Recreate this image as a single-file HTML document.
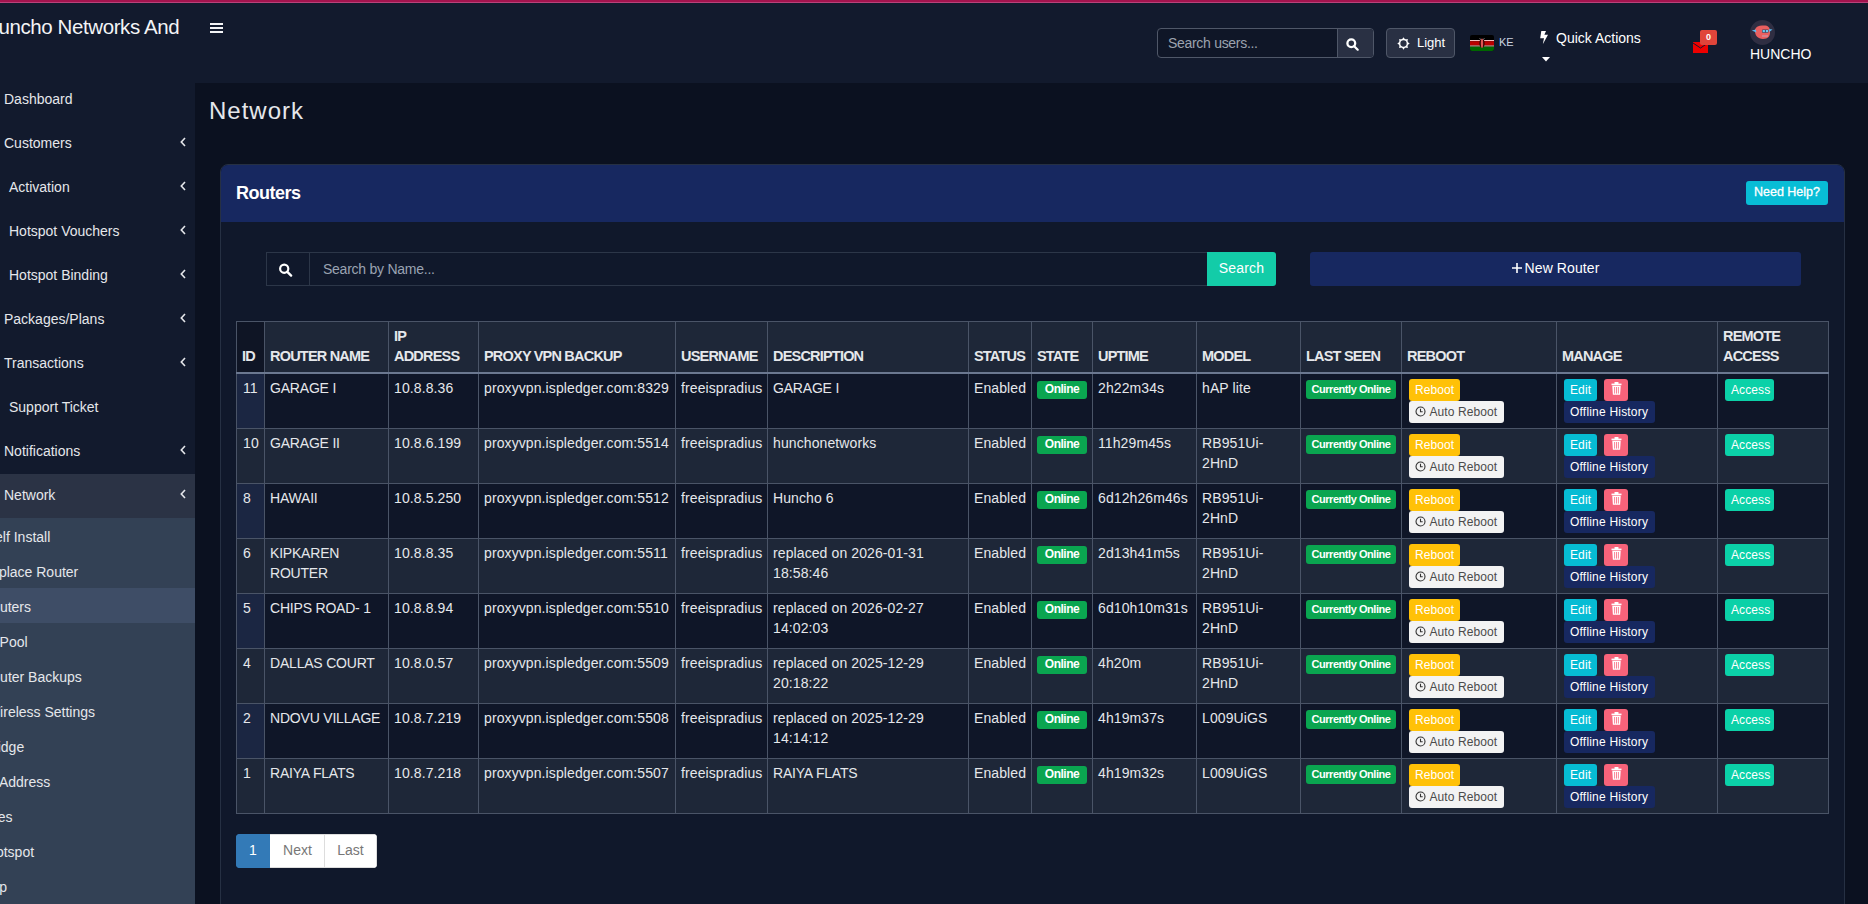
<!DOCTYPE html>
<html><head><meta charset="utf-8"><title>Routers</title>
<style>
*{box-sizing:border-box;margin:0;padding:0}
html,body{width:1868px;height:904px;overflow:hidden}
body{background:#0b1120;font-family:"Liberation Sans",sans-serif;color:#e5e7eb;position:relative}
.abs{position:absolute}
#topline{position:absolute;left:0;top:0;width:1868px;height:3px;background:#a3134d;border-bottom:1px solid #b8427a}
#header{position:absolute;left:0;top:3px;width:1868px;height:80px;background:#121a2d}
#sidebar{position:absolute;left:0;top:83px;width:195px;height:821px;background:#121a2d;overflow:hidden}
.si{position:absolute;font-size:14px;line-height:20px;color:#e5e7eb;white-space:nowrap}
.chev{position:absolute}
#netrow{position:absolute;left:0;top:391px;width:195px;height:44px;background:#2b3345}
#submenu{position:absolute;left:0;top:435px;width:195px;height:400px;background:#334155}
#subactive{position:absolute;left:0;top:505px;width:195px;height:35px;background:#3e4d66}
.ss{position:absolute;font-size:14px;line-height:20px;color:#e5e7eb;white-space:nowrap}
#brand{position:absolute;top:10px;font-size:20.5px;line-height:28px;letter-spacing:-0.4px;color:#f3f4f6;white-space:nowrap}
#content{position:absolute;left:195px;top:83px;width:1673px;height:821px;background:#0b1120}
#title{position:absolute;left:209px;top:96px;font-size:24px;line-height:30px;color:#e5e7eb;letter-spacing:1px}
#card{position:absolute;left:220px;top:164px;width:1625px;height:760px;background:#10182b;border:1px solid #263043;border-radius:8px;overflow:hidden}
#cardhead{position:absolute;left:0;top:0;width:1625px;height:57px;background:#172860}
#routers{position:absolute;left:15px;top:16px;font-size:18px;line-height:24px;font-weight:bold;color:#fff;letter-spacing:-0.5px}
#help{position:absolute;left:1525px;top:16px;width:82px;height:24px;background:#08bdd6;border-radius:3px;color:#fff;font-size:12.5px;line-height:23px;text-align:center;-webkit-text-stroke:0.3px #fff}
#sgroup{position:absolute;left:45px;top:87px;width:942px;height:34px;border:1px solid #2c3648;background:#10182b}
#sicon{position:absolute;left:0;top:0;width:43px;height:32px;border-right:1px solid #2c3648}
#sph{position:absolute;left:56px;top:7px;font-size:14px;line-height:18px;color:#9aa3b2;letter-spacing:-0.25px}
#sbtn{position:absolute;left:986px;top:87px;width:69px;height:34px;background:#13cca8;border-radius:0 3px 3px 0;color:#fff;font-size:14px;line-height:32px;text-align:center;letter-spacing:0.2px}
#newr{position:absolute;left:1089px;top:87px;width:491px;height:34px;background:#172860;border-radius:3px;color:#fff;font-size:14px;line-height:32px;text-align:center;letter-spacing:0.1px}
table{position:absolute;left:236px;top:321px;border-collapse:collapse;table-layout:fixed;width:1593px}
th,td{border:1px solid #4a5467;text-align:left;white-space:nowrap}
th{background:#1e2738;font-size:14.5px;line-height:20px;letter-spacing:-0.8px;font-weight:bold;color:#e5e7eb;vertical-align:bottom;padding:4px 5px 6px 5px;height:50px;border-bottom:2px solid #6b7890}
th.idh{background:#0f1525}
td{font-size:14px;line-height:20px;color:#e5e7eb;vertical-align:top;padding:4px 5px 5px 5px;height:55px;letter-spacing:0.1px}
td.nm{letter-spacing:-0.2px}
td.idc{padding-left:6px}
tr.odd td{background:#0f1628}
tr.odd td.idc{background:#1b2642}
tr.even td{background:#1e2738}
.bdg{display:inline-block;background:#0aa550;color:#fff;font-weight:bold;font-size:12px;line-height:17px;height:18px;padding:0;text-align:center;border-radius:3px;margin-top:3px;letter-spacing:-0.2px}
.online{width:50px;letter-spacing:-0.5px}
.cur{width:90px;height:19px;line-height:18px;margin-top:2px;font-size:11px;letter-spacing:-0.45px}
.btn{display:inline-block;color:#fff;font-size:12px;line-height:22px;height:22px;padding:0 6px;border-radius:3px;vertical-align:top}
.reboot{background:#ffc107;margin-top:1px;margin-left:2px}
.auto{background:#f3f3f3;color:#4b4b4b;margin-left:2px;width:95px;letter-spacing:0.1px}
.edit{background:#06bcd4;margin-top:1px;margin-left:2px}
.del{background:#f7637a;margin-left:7px;margin-top:1px;padding:0 6px;width:24px;text-align:center}
.del svg{vertical-align:-1px}
.hist{background:#172860;margin-left:2px;letter-spacing:0.2px;width:91px}
.access{background:#0bd1a8;margin-top:1px;margin-left:2px;width:49px}
#pag{position:absolute;left:236px;top:834px;height:34px;border-radius:4px;overflow:hidden;display:flex;font-size:14px;line-height:31px}
#pag div{height:34px;text-align:center}
</style></head><body>
<div id="topline"></div>
<div id="header">
  <div id="brand" style="left:-16px">Huncho Networks And</div>
  <svg class="abs" style="left:210px;top:20px" width="13" height="10" viewBox="0 0 13 10"><rect y="0" width="13" height="2" fill="#f3f4f6"/><rect y="4" width="13" height="2" fill="#f3f4f6"/><rect y="8" width="13" height="2" fill="#f3f4f6"/></svg>
  <div class="abs" style="left:1157px;top:25px;width:217px;height:30px;border:1px solid #4f5768;border-radius:4px;background:#0f1627;overflow:hidden">
    <div class="abs" style="left:10px;top:5px;font-size:14px;line-height:18px;color:#9ca3af;letter-spacing:-0.3px">Search users...</div>
    <div class="abs" style="left:179px;top:0;width:37px;height:28px;background:#293043;border-left:1px solid #4f5768"></div>
    <svg class="abs" style="left:188px;top:9px" width="13" height="13" viewBox="0 0 13 13"><circle cx="5.3" cy="5.3" r="3.9" fill="none" stroke="#fff" stroke-width="2.3"/><path d="M8.2 8.2l3.5 3.5" stroke="#fff" stroke-width="2.2" stroke-linecap="round"/></svg>
  </div>
  <div class="abs" style="left:1386px;top:25px;width:69px;height:30px;border:1px solid #4f5768;border-radius:4px;background:#293043">
    <svg class="abs" style="left:9.5px;top:7.5px" width="13" height="13" viewBox="0 0 13 13"><circle cx="6.5" cy="6.5" r="3.9" fill="none" stroke="#fff" stroke-width="1.5"/><path d="M10.54 5.03L12.70 6.50L10.54 7.97z" fill="#fff"/><path d="M10.40 8.31L10.88 10.88L8.31 10.40z" fill="#fff"/><path d="M7.97 10.54L6.50 12.70L5.03 10.54z" fill="#fff"/><path d="M4.69 10.40L2.12 10.88L2.60 8.31z" fill="#fff"/><path d="M2.46 7.97L0.30 6.50L2.46 5.03z" fill="#fff"/><path d="M2.60 4.69L2.12 2.12L4.69 2.60z" fill="#fff"/><path d="M5.03 2.46L6.50 0.30L7.97 2.46z" fill="#fff"/><path d="M8.31 2.60L10.88 2.12L10.40 4.69z" fill="#fff"/></svg>
    <div class="abs" style="left:30px;top:5px;font-size:13px;line-height:18px;color:#fff">Light</div>
  </div>
  <svg class="abs" style="left:1470px;top:32px" width="24" height="16" viewBox="0 0 24 16"><defs><clipPath id="fc"><rect width="24" height="16" rx="2"/></clipPath></defs><g clip-path="url(#fc)"><rect width="24" height="16" fill="#000"/><rect y="5" width="24" height="1.2" fill="#f4c0c0"/><rect y="6.2" width="24" height="4.3" fill="#bb0000"/><rect y="10.5" width="24" height="1.1" fill="#f4c0c0"/><rect y="11.6" width="24" height="4.4" fill="#006600"/><ellipse cx="12" cy="8.2" rx="2.6" ry="4.2" fill="#300"/><ellipse cx="12" cy="8.2" rx="1.2" ry="4.8" fill="#e05555"/><path d="M9.5 3l1.5 2M14.5 3l-1.5 2" stroke="#aaa" stroke-width="0.6"/></g></svg>
  <div class="abs" style="left:1499px;top:32px;font-size:11px;line-height:14px;color:#cbd5e1">KE</div>
  <svg class="abs" style="left:1539px;top:27px" width="10" height="15" viewBox="0 0 10 15"><path d="M2.3 1H7L5.4 4.8H9L3.8 14.2 5 8.3H1.2z" fill="#fff"/></svg>
  <div class="abs" style="left:1556px;top:25px;font-size:14px;line-height:20px;color:#fff">Quick Actions</div>
  <svg class="abs" style="left:1542px;top:54px" width="8" height="5" viewBox="0 0 8 5"><path d="M0 0h8L4 4.5z" fill="#fff"/></svg>
  <svg class="abs" style="left:1693px;top:39px" width="15" height="11" viewBox="0 0 15 11"><rect width="15" height="11" fill="#ee0000"/><path d="M0 1l7.5 5L15 1" fill="none" stroke="#121a2d" stroke-width="1"/></svg>
  <div class="abs" style="left:1700px;top:27px;width:17px;height:15px;background:#e0453a;border-radius:2px;color:#fff;font-size:9px;font-weight:bold;line-height:15px;text-align:center">0</div>
  <svg class="abs" style="left:1750px;top:17px" width="25" height="25" viewBox="0 0 25 25"><circle cx="12.5" cy="12.5" r="12.5" fill="#2f2e42"/><path d="M5 9.5C6 6 10 5 14 5.5 18 5.5 20 7.5 20 11 20.5 16 18 19 13 19 8 19 4.5 15.5 5 9.5z" fill="#ea5f5f"/><path d="M1.8 10.5l4 -1 0.6 3z" fill="#5ab8ee"/><path d="M22.5 9.5l-3.5 -0.5 0.3 3z" fill="#5ab8ee"/><rect x="12" y="9.5" width="6.5" height="3.2" rx="0.8" fill="#3a3f55"/><rect x="12.6" y="10" width="2.3" height="2.2" fill="#6cc8f0"/><rect x="15.8" y="10" width="2.3" height="2.2" fill="#6cc8f0"/><path d="M12 16h6" stroke="#b8b8d0" stroke-width="0.8"/></svg>
  <div class="abs" style="left:1750px;top:42px;font-size:14px;line-height:18px;color:#fff">HUNCHO</div>
</div>
<div id="sidebar">
  <div id="netrow"></div>
  <div id="submenu"></div>
  <div id="subactive"></div>
</div>
<div id="content"></div>
<div class="abs" style="left:0;top:0;width:195px;height:904px;overflow:hidden">
<div class="si" style="left:4px;top:89px">Dashboard</div><div class="si" style="left:4px;top:133px">Customers</div><svg class="chev" style="left:180px;top:136.5px" width="6" height="10" viewBox="0 0 6 10"><path d="M5 1L1.3 5 5 9" fill="none" stroke="#e5e7eb" stroke-width="1.6"/></svg><div class="si" style="left:9px;top:177px">Activation</div><svg class="chev" style="left:180px;top:180.5px" width="6" height="10" viewBox="0 0 6 10"><path d="M5 1L1.3 5 5 9" fill="none" stroke="#e5e7eb" stroke-width="1.6"/></svg><div class="si" style="left:9px;top:221px">Hotspot Vouchers</div><svg class="chev" style="left:180px;top:224.5px" width="6" height="10" viewBox="0 0 6 10"><path d="M5 1L1.3 5 5 9" fill="none" stroke="#e5e7eb" stroke-width="1.6"/></svg><div class="si" style="left:9px;top:265px">Hotspot Binding</div><svg class="chev" style="left:180px;top:268.5px" width="6" height="10" viewBox="0 0 6 10"><path d="M5 1L1.3 5 5 9" fill="none" stroke="#e5e7eb" stroke-width="1.6"/></svg><div class="si" style="left:4px;top:309px">Packages/Plans</div><svg class="chev" style="left:180px;top:312.5px" width="6" height="10" viewBox="0 0 6 10"><path d="M5 1L1.3 5 5 9" fill="none" stroke="#e5e7eb" stroke-width="1.6"/></svg><div class="si" style="left:4px;top:353px">Transactions</div><svg class="chev" style="left:180px;top:356.5px" width="6" height="10" viewBox="0 0 6 10"><path d="M5 1L1.3 5 5 9" fill="none" stroke="#e5e7eb" stroke-width="1.6"/></svg><div class="si" style="left:9px;top:397px">Support Ticket</div><div class="si" style="left:4px;top:441px">Notifications</div><svg class="chev" style="left:180px;top:444.5px" width="6" height="10" viewBox="0 0 6 10"><path d="M5 1L1.3 5 5 9" fill="none" stroke="#e5e7eb" stroke-width="1.6"/></svg><div class="si" style="left:4px;top:485px">Network</div><svg class="chev" style="left:180px;top:488.5px" width="6" height="10" viewBox="0 0 6 10"><path d="M5 1L1.3 5 5 9" fill="none" stroke="#e5e7eb" stroke-width="1.6"/></svg>
<div class="ss" style="left:-14.3px;top:527px">Self Install</div><div class="ss" style="left:-19.0px;top:562px">Replace Router</div><div class="ss" style="left:-18.0px;top:597px">Routers</div><div class="ss" style="left:-17.3px;top:632px">IP Pool</div><div class="ss" style="left:-17.8px;top:667px">Router Backups</div><div class="ss" style="left:-13.1px;top:702px">Wireless Settings</div><div class="ss" style="left:-16.3px;top:737px">Bridge</div><div class="ss" style="left:-17.2px;top:772px">IP Address</div><div class="ss" style="left:-18.5px;top:807px">Sites</div><div class="ss" style="left:-14.2px;top:842px">Hotspot</div><div class="ss" style="left:-20.3px;top:877px">Map</div>
</div>
<div id="title">Network</div>
<div id="card">
  <div id="cardhead"><div id="routers">Routers</div><div id="help">Need Help?</div></div>
  <div id="sgroup"><div id="sicon"><svg class="abs" style="left:11px;top:10px" width="15" height="14" viewBox="0 0 13 13"><circle cx="5.3" cy="5.3" r="3.8" fill="none" stroke="#fff" stroke-width="2"/><path d="M8.2 8.2l3.5 3.5" stroke="#fff" stroke-width="2.2" stroke-linecap="round"/></svg></div><div id="sph">Search by Name...</div></div>
  <div id="sbtn">Search</div>
  <div id="newr"><svg width="10" height="10" viewBox="0 0 10 10" style="vertical-align:0px;margin-right:3px"><path d="M5 0v10M0 5h10" stroke="#fff" stroke-width="1.6"/></svg>New Router</div>
</div>
<table>
<colgroup><col style="width:28px"><col style="width:124px"><col style="width:90px"><col style="width:197px"><col style="width:92px"><col style="width:201px"><col style="width:63px"><col style="width:61px"><col style="width:104px"><col style="width:104px"><col style="width:101px"><col style="width:155px"><col style="width:161px"><col style="width:111px"></colgroup>
<thead><tr><th class="idh">ID</th><th>ROUTER NAME</th><th>IP<br>ADDRESS</th><th>PROXY VPN BACKUP</th><th>USERNAME</th><th>DESCRIPTION</th><th>STATUS</th><th>STATE</th><th>UPTIME</th><th>MODEL</th><th>LAST SEEN</th><th>REBOOT</th><th>MANAGE</th><th>REMOTE<br>ACCESS</th></tr></thead>
<tbody>
<tr class="odd"><td class="idc">11</td><td class="nm">GARAGE I</td><td>10.8.8.36</td><td>proxyvpn.ispledger.com:8329</td><td>freeispradius</td><td class="nm">GARAGE I</td><td>Enabled</td><td><span class="bdg online">Online</span></td><td>2h22m34s</td><td>hAP lite</td><td><span class="bdg cur">Currently Online</span></td><td><span class="btn reboot">Reboot</span><br><span class="btn auto"><svg width="11" height="11" viewBox="0 0 12 12" style="vertical-align:-1px"><circle cx="6" cy="6" r="4.9" fill="none" stroke="#333" stroke-width="1.2"/><path d="M6 3v3.2h2.4" fill="none" stroke="#333" stroke-width="1.2"/></svg>&nbsp;Auto Reboot</span></td><td><span class="btn edit">Edit</span><span class="btn del"><svg width="11" height="13" viewBox="0 0 11 13"><rect x="0.5" y="1.6" width="10" height="1.6" fill="#fff"/><rect x="3.5" y="0" width="4" height="2" rx="0.6" fill="#fff"/><path d="M1.3 3.8h8.4l-0.6 9h-7.2z" fill="#fff"/><path d="M3.6 5v6.6M5.5 5v6.6M7.4 5v6.6" stroke="#f7637a" stroke-width="0.8"/></svg></span><br><span class="btn hist">Offline History</span></td><td><span class="btn access">Access</span></td></tr>
<tr class="even"><td class="idc">10</td><td class="nm">GARAGE II</td><td>10.8.6.199</td><td>proxyvpn.ispledger.com:5514</td><td>freeispradius</td><td>hunchonetworks</td><td>Enabled</td><td><span class="bdg online">Online</span></td><td>11h29m45s</td><td>RB951Ui-<br>2HnD</td><td><span class="bdg cur">Currently Online</span></td><td><span class="btn reboot">Reboot</span><br><span class="btn auto"><svg width="11" height="11" viewBox="0 0 12 12" style="vertical-align:-1px"><circle cx="6" cy="6" r="4.9" fill="none" stroke="#333" stroke-width="1.2"/><path d="M6 3v3.2h2.4" fill="none" stroke="#333" stroke-width="1.2"/></svg>&nbsp;Auto Reboot</span></td><td><span class="btn edit">Edit</span><span class="btn del"><svg width="11" height="13" viewBox="0 0 11 13"><rect x="0.5" y="1.6" width="10" height="1.6" fill="#fff"/><rect x="3.5" y="0" width="4" height="2" rx="0.6" fill="#fff"/><path d="M1.3 3.8h8.4l-0.6 9h-7.2z" fill="#fff"/><path d="M3.6 5v6.6M5.5 5v6.6M7.4 5v6.6" stroke="#f7637a" stroke-width="0.8"/></svg></span><br><span class="btn hist">Offline History</span></td><td><span class="btn access">Access</span></td></tr>
<tr class="odd"><td class="idc">8</td><td class="nm">HAWAII</td><td>10.8.5.250</td><td>proxyvpn.ispledger.com:5512</td><td>freeispradius</td><td>Huncho 6</td><td>Enabled</td><td><span class="bdg online">Online</span></td><td>6d12h26m46s</td><td>RB951Ui-<br>2HnD</td><td><span class="bdg cur">Currently Online</span></td><td><span class="btn reboot">Reboot</span><br><span class="btn auto"><svg width="11" height="11" viewBox="0 0 12 12" style="vertical-align:-1px"><circle cx="6" cy="6" r="4.9" fill="none" stroke="#333" stroke-width="1.2"/><path d="M6 3v3.2h2.4" fill="none" stroke="#333" stroke-width="1.2"/></svg>&nbsp;Auto Reboot</span></td><td><span class="btn edit">Edit</span><span class="btn del"><svg width="11" height="13" viewBox="0 0 11 13"><rect x="0.5" y="1.6" width="10" height="1.6" fill="#fff"/><rect x="3.5" y="0" width="4" height="2" rx="0.6" fill="#fff"/><path d="M1.3 3.8h8.4l-0.6 9h-7.2z" fill="#fff"/><path d="M3.6 5v6.6M5.5 5v6.6M7.4 5v6.6" stroke="#f7637a" stroke-width="0.8"/></svg></span><br><span class="btn hist">Offline History</span></td><td><span class="btn access">Access</span></td></tr>
<tr class="even"><td class="idc">6</td><td class="nm">KIPKAREN<br>ROUTER</td><td>10.8.8.35</td><td>proxyvpn.ispledger.com:5511</td><td>freeispradius</td><td>replaced on 2026-01-31<br>18:58:46</td><td>Enabled</td><td><span class="bdg online">Online</span></td><td>2d13h41m5s</td><td>RB951Ui-<br>2HnD</td><td><span class="bdg cur">Currently Online</span></td><td><span class="btn reboot">Reboot</span><br><span class="btn auto"><svg width="11" height="11" viewBox="0 0 12 12" style="vertical-align:-1px"><circle cx="6" cy="6" r="4.9" fill="none" stroke="#333" stroke-width="1.2"/><path d="M6 3v3.2h2.4" fill="none" stroke="#333" stroke-width="1.2"/></svg>&nbsp;Auto Reboot</span></td><td><span class="btn edit">Edit</span><span class="btn del"><svg width="11" height="13" viewBox="0 0 11 13"><rect x="0.5" y="1.6" width="10" height="1.6" fill="#fff"/><rect x="3.5" y="0" width="4" height="2" rx="0.6" fill="#fff"/><path d="M1.3 3.8h8.4l-0.6 9h-7.2z" fill="#fff"/><path d="M3.6 5v6.6M5.5 5v6.6M7.4 5v6.6" stroke="#f7637a" stroke-width="0.8"/></svg></span><br><span class="btn hist">Offline History</span></td><td><span class="btn access">Access</span></td></tr>
<tr class="odd"><td class="idc">5</td><td class="nm">CHIPS ROAD- 1</td><td>10.8.8.94</td><td>proxyvpn.ispledger.com:5510</td><td>freeispradius</td><td>replaced on 2026-02-27<br>14:02:03</td><td>Enabled</td><td><span class="bdg online">Online</span></td><td>6d10h10m31s</td><td>RB951Ui-<br>2HnD</td><td><span class="bdg cur">Currently Online</span></td><td><span class="btn reboot">Reboot</span><br><span class="btn auto"><svg width="11" height="11" viewBox="0 0 12 12" style="vertical-align:-1px"><circle cx="6" cy="6" r="4.9" fill="none" stroke="#333" stroke-width="1.2"/><path d="M6 3v3.2h2.4" fill="none" stroke="#333" stroke-width="1.2"/></svg>&nbsp;Auto Reboot</span></td><td><span class="btn edit">Edit</span><span class="btn del"><svg width="11" height="13" viewBox="0 0 11 13"><rect x="0.5" y="1.6" width="10" height="1.6" fill="#fff"/><rect x="3.5" y="0" width="4" height="2" rx="0.6" fill="#fff"/><path d="M1.3 3.8h8.4l-0.6 9h-7.2z" fill="#fff"/><path d="M3.6 5v6.6M5.5 5v6.6M7.4 5v6.6" stroke="#f7637a" stroke-width="0.8"/></svg></span><br><span class="btn hist">Offline History</span></td><td><span class="btn access">Access</span></td></tr>
<tr class="even"><td class="idc">4</td><td class="nm">DALLAS COURT</td><td>10.8.0.57</td><td>proxyvpn.ispledger.com:5509</td><td>freeispradius</td><td>replaced on 2025-12-29<br>20:18:22</td><td>Enabled</td><td><span class="bdg online">Online</span></td><td>4h20m</td><td>RB951Ui-<br>2HnD</td><td><span class="bdg cur">Currently Online</span></td><td><span class="btn reboot">Reboot</span><br><span class="btn auto"><svg width="11" height="11" viewBox="0 0 12 12" style="vertical-align:-1px"><circle cx="6" cy="6" r="4.9" fill="none" stroke="#333" stroke-width="1.2"/><path d="M6 3v3.2h2.4" fill="none" stroke="#333" stroke-width="1.2"/></svg>&nbsp;Auto Reboot</span></td><td><span class="btn edit">Edit</span><span class="btn del"><svg width="11" height="13" viewBox="0 0 11 13"><rect x="0.5" y="1.6" width="10" height="1.6" fill="#fff"/><rect x="3.5" y="0" width="4" height="2" rx="0.6" fill="#fff"/><path d="M1.3 3.8h8.4l-0.6 9h-7.2z" fill="#fff"/><path d="M3.6 5v6.6M5.5 5v6.6M7.4 5v6.6" stroke="#f7637a" stroke-width="0.8"/></svg></span><br><span class="btn hist">Offline History</span></td><td><span class="btn access">Access</span></td></tr>
<tr class="odd"><td class="idc">2</td><td class="nm">NDOVU VILLAGE</td><td>10.8.7.219</td><td>proxyvpn.ispledger.com:5508</td><td>freeispradius</td><td>replaced on 2025-12-29<br>14:14:12</td><td>Enabled</td><td><span class="bdg online">Online</span></td><td>4h19m37s</td><td>L009UiGS</td><td><span class="bdg cur">Currently Online</span></td><td><span class="btn reboot">Reboot</span><br><span class="btn auto"><svg width="11" height="11" viewBox="0 0 12 12" style="vertical-align:-1px"><circle cx="6" cy="6" r="4.9" fill="none" stroke="#333" stroke-width="1.2"/><path d="M6 3v3.2h2.4" fill="none" stroke="#333" stroke-width="1.2"/></svg>&nbsp;Auto Reboot</span></td><td><span class="btn edit">Edit</span><span class="btn del"><svg width="11" height="13" viewBox="0 0 11 13"><rect x="0.5" y="1.6" width="10" height="1.6" fill="#fff"/><rect x="3.5" y="0" width="4" height="2" rx="0.6" fill="#fff"/><path d="M1.3 3.8h8.4l-0.6 9h-7.2z" fill="#fff"/><path d="M3.6 5v6.6M5.5 5v6.6M7.4 5v6.6" stroke="#f7637a" stroke-width="0.8"/></svg></span><br><span class="btn hist">Offline History</span></td><td><span class="btn access">Access</span></td></tr>
<tr class="even"><td class="idc">1</td><td class="nm">RAIYA FLATS</td><td>10.8.7.218</td><td>proxyvpn.ispledger.com:5507</td><td>freeispradius</td><td class="nm">RAIYA FLATS</td><td>Enabled</td><td><span class="bdg online">Online</span></td><td>4h19m32s</td><td>L009UiGS</td><td><span class="bdg cur">Currently Online</span></td><td><span class="btn reboot">Reboot</span><br><span class="btn auto"><svg width="11" height="11" viewBox="0 0 12 12" style="vertical-align:-1px"><circle cx="6" cy="6" r="4.9" fill="none" stroke="#333" stroke-width="1.2"/><path d="M6 3v3.2h2.4" fill="none" stroke="#333" stroke-width="1.2"/></svg>&nbsp;Auto Reboot</span></td><td><span class="btn edit">Edit</span><span class="btn del"><svg width="11" height="13" viewBox="0 0 11 13"><rect x="0.5" y="1.6" width="10" height="1.6" fill="#fff"/><rect x="3.5" y="0" width="4" height="2" rx="0.6" fill="#fff"/><path d="M1.3 3.8h8.4l-0.6 9h-7.2z" fill="#fff"/><path d="M3.6 5v6.6M5.5 5v6.6M7.4 5v6.6" stroke="#f7637a" stroke-width="0.8"/></svg></span><br><span class="btn hist">Offline History</span></td><td><span class="btn access">Access</span></td></tr>
</tbody>
</table>
<div id="pag">
  <div style="width:34px;background:#337ab7;color:#fff;border:1px solid #337ab7">1</div>
  <div style="width:55px;background:#fff;color:#777;border:1px solid #ddd;border-left:0;padding-left:1px">Next</div>
  <div style="width:52px;background:#fff;color:#777;border:1px solid #ddd;border-left:0">Last</div>
</div>
</body></html>
